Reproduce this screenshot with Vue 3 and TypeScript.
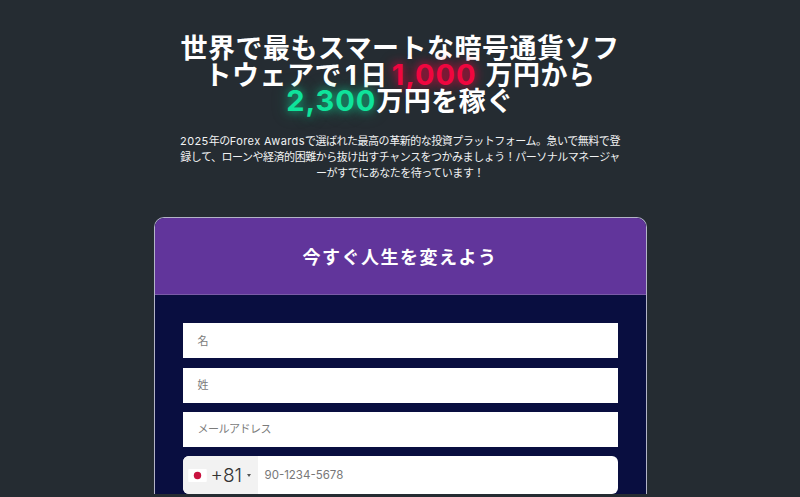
<script setup lang="ts">
const fields: string[] = ['名', '姓', 'メールアドレス']
</script>

<template>
  <main class="page">
    <section class="hero">
      <h1 class="title">世界で最もスマートな暗号通貨ソフトウェアで<span class="one">1</span>日<span class="red num">1,000 </span> 万円から<br><span class="green num">2,300</span>万円を稼ぐ</h1>
      <p class="lead"><span class="latin">2025</span>年の<span class="latin">Forex Awards</span>で選ばれた最高の革新的な投資プラットフォーム。急いで無料で登録して、ローンや経済的困難から抜け出すチャンスをつかみましょう！パーソナルマネージャーがすでにあなたを待っています！</p>
    </section>
    <section class="card">
      <header class="card-head">今すぐ人生を変えよう</header>
      <form class="card-body">
        <div v-for="f in fields" :key="f" class="field">{{ f }}</div>
        <div class="phone">
          <div class="dial">
            <svg class="flag" viewBox="0 0 20 14" width="19" height="13">
              <rect width="20" height="14" rx="1" fill="#fff" />
              <circle cx="10" cy="7" r="4" fill="#c9123f" />
            </svg>
            <span class="code">+81</span>
            <i class="caret"></i>
          </div>
          <span class="ph">90-1234-5678</span>
        </div>
      </form>
    </section>
  </main>
</template>

<style>
html, body { margin: 0; background: #252c32; }
body { overflow: hidden; height: 497px; }
</style>

<style scoped>
.page {
  height: 497px;
  overflow: hidden;
  background: #252c32;
  display: flex;
  flex-direction: column;
  align-items: center;
  font-family: Inter, "Noto Sans CJK JP", sans-serif;
}
.hero {
  width: 446px;
  padding-top: 36px;
  text-align: center;
  color: #fff;
}
.title {
  margin: 0;
  font-size: 27px;
  line-height: 26.5px;
  font-weight: 700;
  letter-spacing: 0.5px;
}
.one { margin: 0 3px; }
.num { font-size: 29px; line-height: 0; letter-spacing: 1px; }
.red { color: #f0063f; margin: 0 1px 0 4px; text-shadow: 0 0 10px rgba(240, 6, 63, 0.8), 0 0 16px rgba(240, 6, 63, 0.35); }
.green { color: #0fe39b; text-shadow: 0 0 10px rgba(15, 227, 155, 0.7), 0 0 18px rgba(15, 227, 155, 0.35); }
.lead {
  margin: 17.5px 0 0;
  font-size: 11px;
  line-height: 16px;
  letter-spacing: -0.48px;
  color: #f1f2f3;
}
.latin { letter-spacing: 0.4px; }
.card {
  margin-top: 36px;
  width: 493px;
  box-sizing: border-box;
  flex: none;
  border: 1px solid #b3b3c7;
  border-bottom: 0;
  border-radius: 10px 10px 0 0;
  overflow: hidden;
  background: #090e40;
}
.card-head {
  height: 76px;
  display: flex;
  align-items: center;
  justify-content: center;
  background: #61359b;
  border-bottom: 1px solid #7a5ba8;
  color: #fff;
  font-size: 18px;
  font-weight: 700;
  letter-spacing: 1.5px;
}
.card-body {
  padding: 28.4px 28px 0;
  display: flex;
  flex-direction: column;
  gap: 9.3px;
}
.field {
  height: 35px;
  box-sizing: border-box;
  background: #fff;
  padding: 0 0 2px 15px;
  display: flex;
  align-items: center;
  color: #7b7b7b;
  font-size: 11px;
  letter-spacing: -0.5px;
}
.phone {
  height: 38px;
  display: flex;
  align-items: center;
  background: #fff;
  border-radius: 6px;
  overflow: hidden;
  font-size: 11.5px;
  color: #777;
}
.dial {
  width: 75px;
  height: 100%;
  display: flex;
  align-items: center;
  padding-left: 5px;
  box-sizing: border-box;
  background: #f2f2f2;
  flex: none;
}
.flag { flex: none; }
.code {
  margin-left: 4px;
  color: #333;
  font-size: 19px;
  font-weight: 300;
}
.caret {
  margin-left: 5px;
  border-left: 2.5px solid transparent;
  border-right: 2.5px solid transparent;
  border-top: 3px solid #555;
}
.ph { margin-left: 7px; }
</style>
